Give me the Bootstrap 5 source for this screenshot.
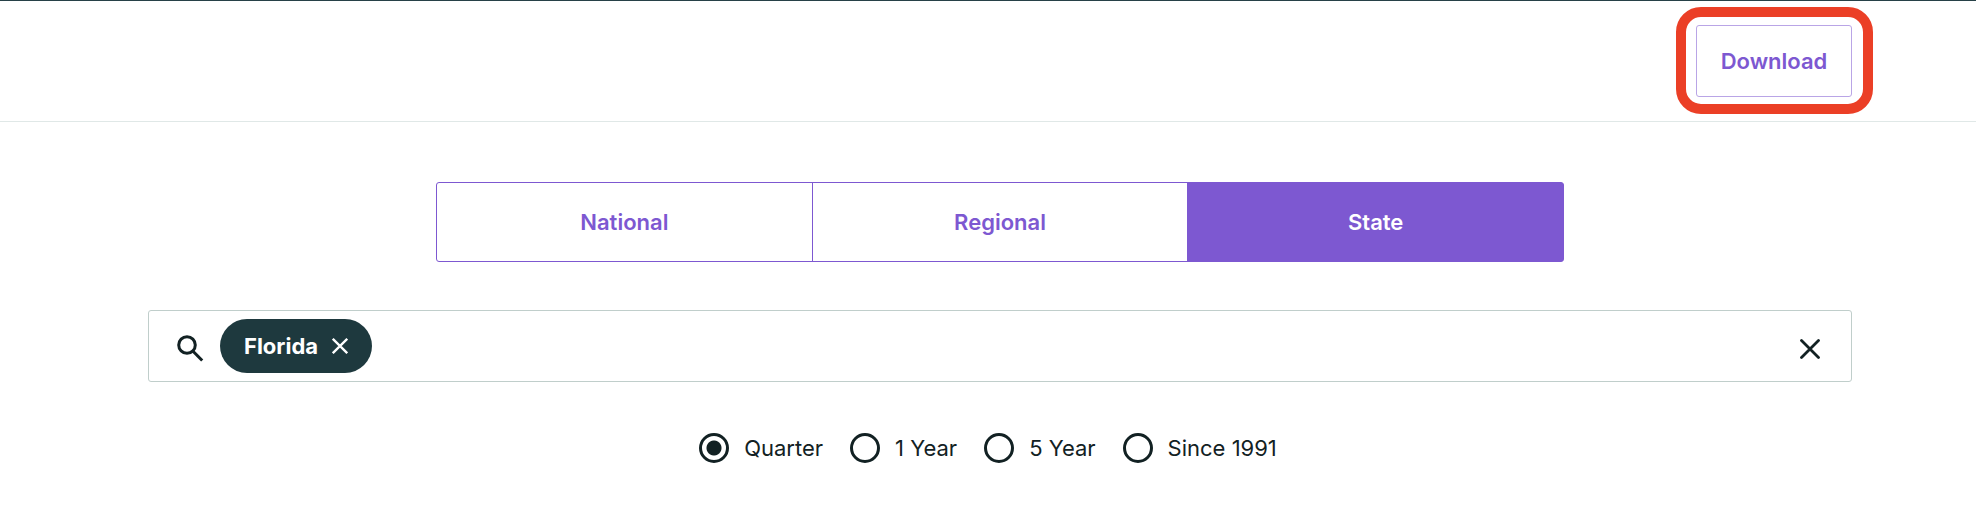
<!DOCTYPE html>
<html lang="en">
<head>
<meta charset="utf-8">
<meta name="viewport" content="width=device-width, initial-scale=1">
<title>House prices by state</title>
<link href="https://cdn.jsdelivr.net/npm/bootstrap@5.3.0/dist/css/bootstrap.min.css" rel="stylesheet">
<style>
  :root { --purple: #7d58d1; --ink: #122123; --pine: #1e393e; }
  body { font-family: Inter, "Liberation Sans", sans-serif; font-size: 22px; line-height: 28px; color: var(--ink); background: #fff; }
  .page-gutter { padding-left: 148px; padding-right: 124px; }
  .top-bar { border-top: 1px solid #274147; border-bottom: 1px solid #e0e8e7; padding-top: 24px; padding-bottom: 24px; }
  .download-btn { --bs-btn-color: var(--purple); --bs-btn-border-color: #b9a5e6; --bs-btn-hover-color: var(--purple); --bs-btn-hover-border-color: var(--purple);
    width: 156px; height: 72px; font-size: 22px; line-height: 28px; font-weight: 600; border-radius: 3px; padding: 0; }
  .highlight-ring { inset: -18px -21px -17px -20px; border: 10px solid #eb3f26; border-radius: 25px; pointer-events: none; }
  .content-stack { padding-top: 60px; }
  .level-tabs { width: 100%; max-width: 1128px; height: 80px; }
  .level-tabs .btn { --bs-btn-color: var(--purple); --bs-btn-border-color: var(--purple); --bs-btn-hover-color: var(--purple); --bs-btn-hover-border-color: var(--purple);
    --bs-btn-active-bg: var(--purple); --bs-btn-active-border-color: var(--purple); --bs-btn-active-color: #fff; --bs-btn-border-radius: 3px;
    flex: 1 1 0; font-size: 22px; line-height: 28px; font-weight: 600; }
  .search-box { height: 72px; border: 1px solid #c0cecb; border-radius: 3px; padding: 0 31px 0 28px; }
  .search-box input { outline: 0; min-width: 0; }
  .search-box .icon-drop { margin-top: 6px; }
  .state-chip { height: 54px; background: var(--pine); margin-left: 15px; padding: 0 24px; gap: 14px; font-weight: 700; }
  .icon-btn { line-height: 0; color: inherit; }
  .period-list { margin-top: 51px; padding-right: 24px; gap: 27px; }
  .period { gap: 15px; }
  .period input { appearance: none; width: 30px; height: 30px; margin: 0; border: 3px solid var(--ink); border-radius: 50%; }
  .period input:checked { background: radial-gradient(circle, var(--ink) 7px, transparent 8px); }
</style>
</head>
<body>
<header class="top-bar page-gutter d-flex justify-content-end">
  <div class="position-relative">
    <button type="button" class="btn download-btn">Download</button>
    <div class="highlight-ring position-absolute"></div>
  </div>
</header>
<main class="content-stack page-gutter d-flex flex-column">
  <div class="btn-group level-tabs mx-auto" role="group" aria-label="Area level">
    <button type="button" class="btn d-flex align-items-center justify-content-center">National</button>
    <button type="button" class="btn d-flex align-items-center justify-content-center">Regional</button>
    <button type="button" class="btn active d-flex align-items-center justify-content-center" aria-pressed="true">State</button>
  </div>
  <div class="search-box d-flex align-items-center mt-5">
    <svg class="icon-drop flex-shrink-0" width="28" height="28" viewBox="0 0 28 28" fill="none" stroke="#122123" stroke-width="3" aria-hidden="true"><circle cx="10" cy="10" r="8.3"/><path d="M16 16.2l9.2 9.3"/></svg>
    <span class="state-chip rounded-pill text-white d-inline-flex align-items-center">Florida
      <button type="button" class="btn icon-btn border-0 p-0" aria-label="Remove Florida"><svg width="16" height="16" viewBox="0 0 16 16" stroke="#fff" stroke-width="2.3"><path d="M.8.8l14.4 14.4M15.2.8L.8 15.2"/></svg></button>
    </span>
    <input type="text" class="border-0 flex-grow-1 ms-2" aria-label="Search states">
    <button type="button" class="btn icon-btn icon-drop border-0 p-0" aria-label="Clear search"><svg width="20" height="20" viewBox="0 0 20 20" stroke="#122123" stroke-width="2.8" stroke-linecap="round"><path d="M1.5 1.5l17 17M18.5 1.5l-17 17"/></svg></button>
  </div>
  <div class="period-list d-flex flex-wrap justify-content-center" role="radiogroup" aria-label="Period">
    <label class="period d-flex align-items-center"><input type="radio" name="period" checked>Quarter</label>
    <label class="period d-flex align-items-center"><input type="radio" name="period">1 Year</label>
    <label class="period d-flex align-items-center"><input type="radio" name="period">5 Year</label>
    <label class="period d-flex align-items-center"><input type="radio" name="period">Since 1991</label>
  </div>
</main>
<script src="https://cdn.jsdelivr.net/npm/bootstrap@5.3.0/dist/js/bootstrap.bundle.min.js"></script>
</body>
</html>
